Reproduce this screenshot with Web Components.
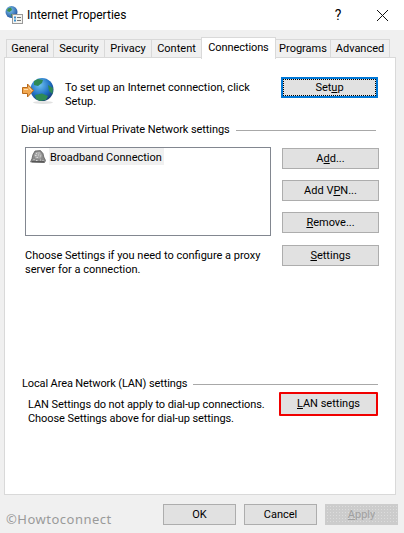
<!DOCTYPE html>
<html>
<head>
<meta charset="utf-8">
<title>Internet Properties</title>
<style>
    html, body { margin: 0; padding: 0; }
    body { width: 404px; height: 533px; overflow: hidden; background: #f0f0f0; color: #000;
        font: 11px Roboto, sans-serif; }
    u { text-underline-offset: 1px; }
</style>
</head>
<body>
<properties-dialog>
    <dialog-titlebar slot="title">Internet Properties</dialog-titlebar>

    <tab-strip slot="tabs">
        <tab-item style="width:48px">General</tab-item>
        <tab-item style="width:51px">Security</tab-item>
        <tab-item style="width:47px">Privacy</tab-item>
        <tab-item style="width:50px">Content</tab-item>
        <tab-item style="width:75px" selected>Connections</tab-item>
        <tab-item style="width:55px">Programs</tab-item>
        <tab-item style="width:59px">Advanced</tab-item>
    </tab-strip>

    <connections-panel slot="panel"></connections-panel>

    <span slot="mark">©Howtoconnect</span>
    <win-button slot="actions">OK</win-button>
    <win-button slot="actions">Cancel</win-button>
    <win-button slot="actions" disabled><u>A</u>pply</win-button>
</properties-dialog>

<script>
class PropertiesDialog extends HTMLElement {
    constructor() {
        super();
        this.attachShadow({ mode: 'open' });
        this.shadowRoot.innerHTML = `
            <style>
                :host { display: flex; flex-direction: column; width: 404px; height: 533px; }
                .tabs { padding: 9px 0 0 6px; height: 18px; }
                .panel { margin: 0 8px 0 4px; }
                .footer { display: flex; justify-content: space-between; padding: 9px 6px 0 6px; }
                .mark { font: 13px "Noto Sans", sans-serif; letter-spacing: 0.5px; color: #9a9a9a; padding-top: 6px; }
                .actions { display: flex; gap: 8px; width: 235px; height: 21px; }
            </style>
            <slot name="title"></slot>
            <div class="tabs"><slot name="tabs"></slot></div>
            <div class="panel"><slot name="panel"></slot></div>
            <div class="footer">
                <div class="mark"><slot name="mark"></slot></div>
                <div class="actions"><slot name="actions"></slot></div>
            </div>
        `;
    }
}

class DialogTitlebar extends HTMLElement {
    constructor() {
        super();
        this.attachShadow({ mode: 'open' });
        this.shadowRoot.innerHTML = `
            <style>
                :host { display: flex; align-items: center; height: 30px; background: #fff; font-size: 12px; }
                svg.icon { margin: 0 4px 0 5px; flex: none; }
                .text { flex: 1; }
                .help { width: 12px; font-size: 14px; margin-right: 33px; text-align: center; }
                .close { margin-right: 16px; }
            </style>
            <svg class="icon" width="18" height="18" viewBox="0 0 18 18">
                <defs>
                    <radialGradient id="tg" cx="0.4" cy="0.35" r="0.7">
                        <stop offset="0" stop-color="#7cc4ee"/><stop offset="1" stop-color="#1f4f9c"/>
                    </radialGradient>
                </defs>
                <circle cx="6.5" cy="6" r="6" fill="url(#tg)"/>
                <path d="M3 2.5 6 1.500 7 4 4.500 6 2 5ZM6 8l3 .5 .5 2.500L7 12Z" fill="#3f8f4a"/>
                <rect x="7.5" y="8.5" width="10" height="9" fill="#f4f4f0" stroke="#9a9a9a"/>
                <rect x="9" y="10.5" width="2" height="2" fill="#3a8fd0"/>
                <rect x="9" y="13.5" width="2" height="2" fill="#3a8fd0"/>
                <path d="M12 11.500h4M12 14.500h4" stroke="#777"/>
            </svg>
            <span class="text"><slot></slot></span>
            <span class="help">?</span>
            <svg class="close" width="11" height="11" viewBox="0 0 11 11">
                <path d="M0 0 11 11M11 0 0 11" stroke="#111" fill="none"/>
            </svg>
        `;
    }
}

class TabStrip extends HTMLElement {
    constructor() {
        super();
        this.attachShadow({ mode: 'open' });
        this.shadowRoot.innerHTML = `
            <style>:host { display: flex; height: 18px; position: relative; z-index: 1; }</style>
            <slot></slot>
        `;
    }
}

class TabItem extends HTMLElement {
    constructor() {
        super();
        this.attachShadow({ mode: 'open' });
        this.shadowRoot.innerHTML = `
            <style>
                :host { display: flex; align-items: center; justify-content: center; box-sizing: border-box;
                    height: 19px; background: #f0f0f0; border: 1px solid #d9d9d9; border-left-width: 0; flex: none; }
                :host(:first-child) { border-left-width: 1px; }
                :host([selected]) { height: 22px; margin-top: -2px; background: #fff; border-bottom: 0;
                    border-left-width: 1px; margin-left: -1px; padding-bottom: 3px; letter-spacing: -0.1px; }
            </style>
            <slot></slot>
        `;
    }
}

class WinButton extends HTMLElement {
    constructor() {
        super();
        this.attachShadow({ mode: 'open' });
        this.shadowRoot.innerHTML = `
            <style>
                :host { display: flex; align-items: center; justify-content: center; box-sizing: border-box;
                    width: 73px; height: 21px; flex: none; background: #e1e1e1; border: 1px solid #adadad; }
                :host([wide]) { width: 97px; }
                :host([focused]) { border: 2px solid #0078d7; outline: 1px dotted #000; outline-offset: -3px; }
                :host([flagged]) { width: 99px; height: 24px; border: 2px solid #f00000; border-radius: 1px; }
                :host([disabled]) { color: #a0a0a0; border-color: #cccccc; background-color: #cccccc;
                    background-image: radial-gradient(#dcdcdc 0.6px, transparent 0.7px); background-size: 3px 3px; }
            </style>
            <slot></slot>
        `;
    }
}

class GroupLabel extends HTMLElement {
    constructor() {
        super();
        this.attachShadow({ mode: 'open' });
        this.shadowRoot.innerHTML = `
            <style>
                :host { display: flex; align-items: center; gap: 6px; letter-spacing: -0.08px; }
                .rule { flex: 1; height: 1px; background: #a8a8a8; }
            </style>
            <slot></slot><span class="rule"></span>
        `;
    }
}

class ConnectionList extends HTMLElement {
    constructor() {
        super();
        this.attachShadow({ mode: 'open' });
        this.shadowRoot.innerHTML = `
            <style>
                :host { display: block; box-sizing: border-box; width: 246px; height: 89px; background: #fff;
                    border: 1px solid #828790; padding: 0 0 0 4px; }
                .row { display: flex; align-items: center; gap: 3px; height: 17px; }
                svg { flex: none; }
                .name { background: #f0f0f0; padding: 0 2px 0 1px; height: 17px; line-height: 19px; }
            </style>
            <div class="row">
                <svg width="16" height="13" viewBox="0 0 16 13">
                    <path d="M0.600 12 2 8.500 3 4.500 5 1 10.500 0.600 13 3.500 13.800 7 15.600 10.500 14.500 12.500Z" fill="#8a8a8a" stroke="#555" stroke-width="0.7"/>
                    <path d="M4 5 6 2 10 1.800 12 5 11 8.500 5.500 8.500Z" fill="#a8a8a8"/>
                    <path d="M6 3.500h1M8.500 3h1M5 5.500h1.500M8 5h1M10 6h1M6.500 7.500h1.500M3.500 9.500h1M6 10.500h1.500M10 10h1M12.500 10.500h1"
                        stroke="#dcdcdc" stroke-width="0.9" fill="none"/>
                    <path d="M2 11.800h12" stroke="#3f3f3f" stroke-width="0.9"/>
                </svg>
                <span class="name"><slot></slot></span>
            </div>
        `;
    }
}

class ConnectionsPanel extends HTMLElement {
    constructor() {
        super();
        this.attachShadow({ mode: 'open' });
        this.shadowRoot.innerHTML = `
            <style>
                :host { display: flex; flex-direction: column; box-sizing: border-box; height: 438px;
                    background: #fff; border: 1px solid #d9d9d9; line-height: 14px; }
                .setup { display: flex; margin: 19px 17px 0 17px; height: 26px; }
                .setup svg { flex: none; margin-right: 10px; }
                .setup p { margin: 4px 0 0 0; width: 216px; flex: none; }
                .vpn-label { margin: 20px 19px 0 16px; }
                .vpn { display: grid; grid-template-columns: 246px 97px; column-gap: 11px; margin: 10px 0 0 20px; }
                .stack { display: flex; flex-direction: column; gap: 11px; margin-top: 1px; }
                .proxy { display: flex; justify-content: space-between; width: 354px; margin: 9px 0 0 20px; }
                .proxy p { margin: 4px 0 0 0; width: 240px; }
                .lan-label { margin: 100px 17px 0 17px; letter-spacing: -0.12px; }
                .lan { display: flex; justify-content: space-between; margin: 1px 17px 0 23px; }
                .lan p { margin: 6px 0 0 0; letter-spacing: -0.08px; }
            </style>
            <div class="setup">
                <svg width="33" height="28" viewBox="0 0 33 28">
                    <defs>
                        <radialGradient id="gl" cx="0.4" cy="0.3" r="0.75">
                            <stop offset="0" stop-color="#6fc3f0"/><stop offset="0.6" stop-color="#1f6fc4"/>
                            <stop offset="1" stop-color="#17346f"/>
                        </radialGradient>
                    </defs>
                    <ellipse cx="21" cy="25.500" rx="10" ry="1.500" fill="#e2e2e2"/>
                    <circle cx="20" cy="12.500" r="11.500" fill="url(#gl)"/>
                    <path d="M12 4 16 2 21 3 20 6 16 9 12 8ZM13 18 20 16.500 26 19 24 23 18 24 14 22ZM26 8 31 11 30.500 17 27 14Z" fill="#2f8a55"/>
                    <path d="M0.500 10.500h5V7l6 6.500-6 6.500v-3.500h-5Z" fill="#f2a850" stroke="#b86a1c"/>
                    <path d="M2 12.500h4M7 10.500l2.500 3" stroke="#ffe0b0" fill="none"/>
                </svg>
                <p>To set up an Internet connection, click<br>Setup.</p>
                <win-button wide focused>Set<u>u</u>p</win-button>
            </div>

            <group-label class="vpn-label">Dial-up and Virtual Private Network settings</group-label>

            <div class="vpn">
                <connection-list>Broadband Connection</connection-list>
                <div class="stack">
                    <win-button wide>A<u>d</u>d...</win-button>
                    <win-button wide>Add V<u>P</u>N...</win-button>
                    <win-button wide><u>R</u>emove...</win-button>
                </div>
            </div>

            <div class="proxy">
                <p>Choose Settings if you need to configure a proxy<br>server for a connection.</p>
                <win-button wide><u>S</u>ettings</win-button>
            </div>

            <group-label class="lan-label">Local Area Network (LAN) settings</group-label>

            <div class="lan">
                <p>LAN Settings do not apply to dial-up connections.<br>Choose Settings above for dial-up settings.</p>
                <win-button flagged><u>L</u>AN settings</win-button>
            </div>
        `;
    }
}

customElements.define('properties-dialog', PropertiesDialog);
customElements.define('dialog-titlebar', DialogTitlebar);
customElements.define('tab-strip', TabStrip);
customElements.define('tab-item', TabItem);
customElements.define('win-button', WinButton);
customElements.define('group-label', GroupLabel);
customElements.define('connection-list', ConnectionList);
customElements.define('connections-panel', ConnectionsPanel);
</script>
</body>
</html>
